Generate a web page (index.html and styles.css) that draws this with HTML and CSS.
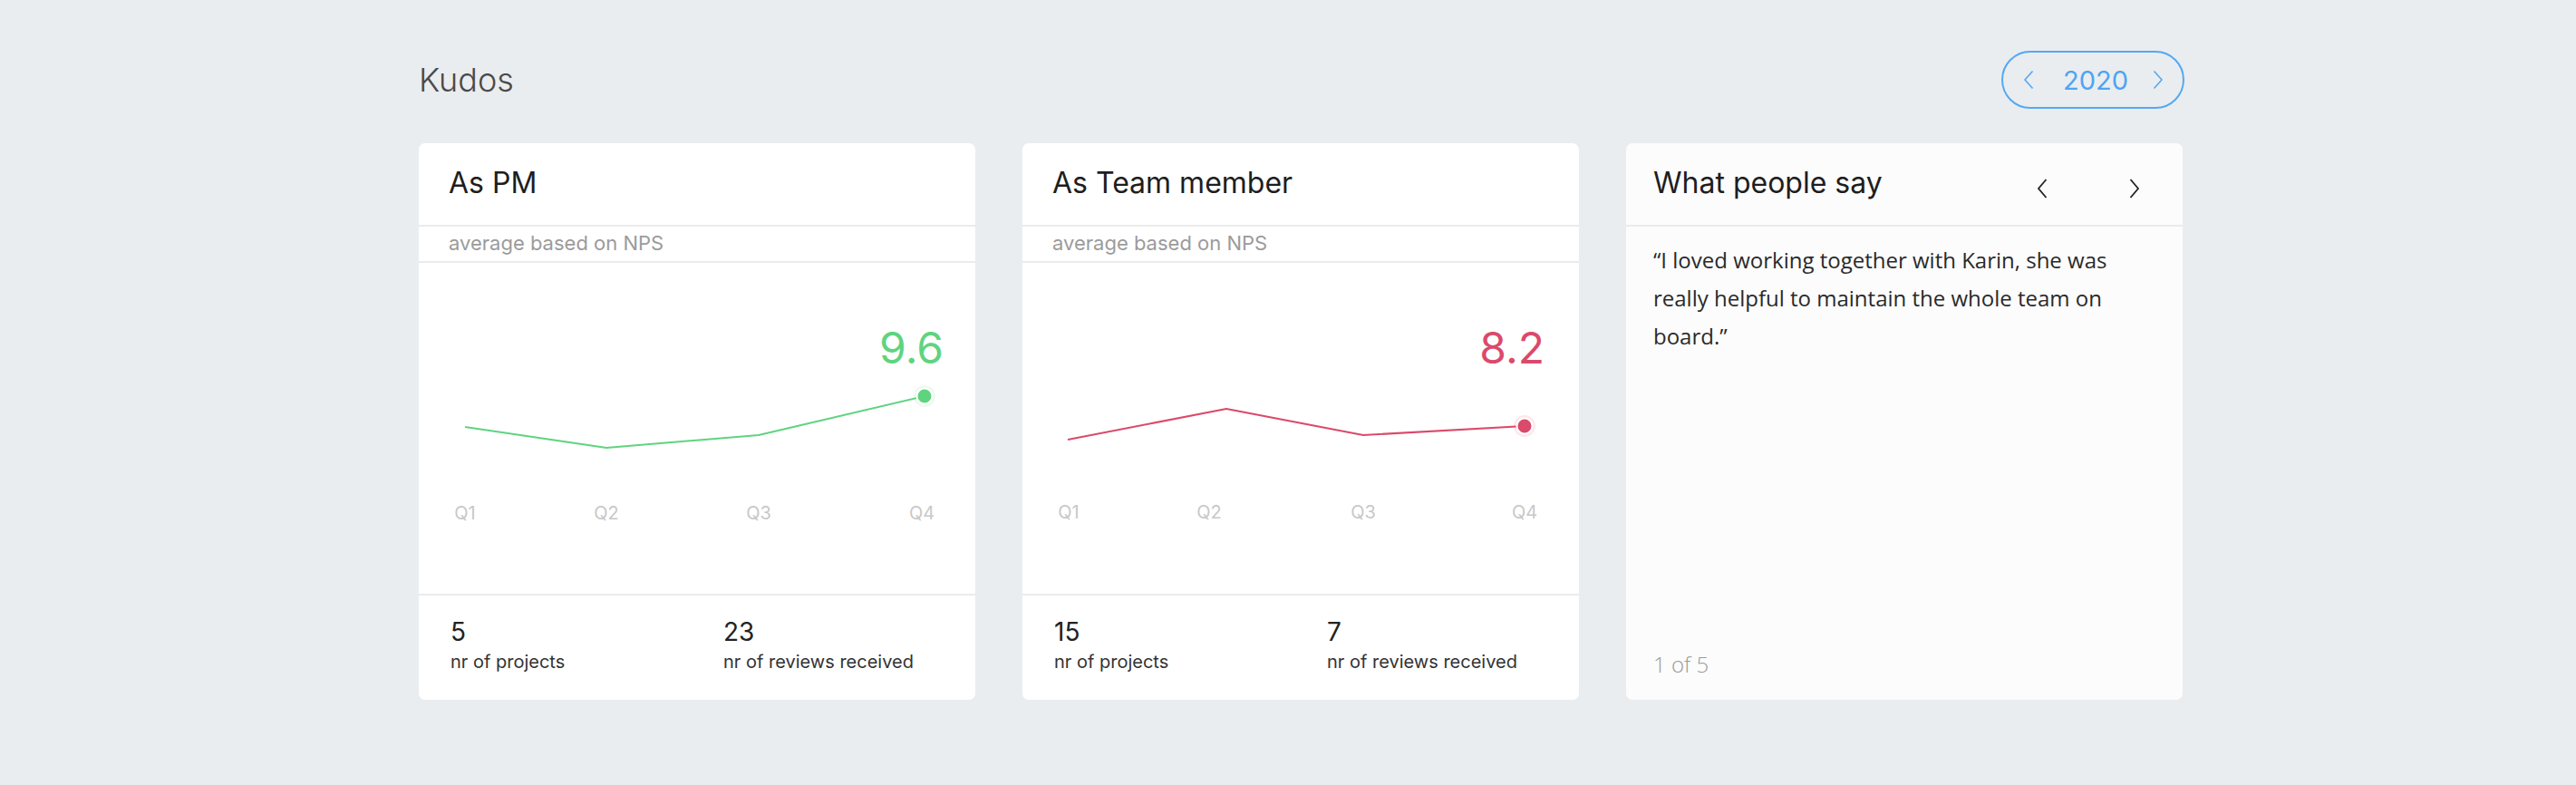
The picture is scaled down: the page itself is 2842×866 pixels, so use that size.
FILE: index.html
```html
<!DOCTYPE html>
<html lang="en">
<head>
<meta charset="utf-8">
<title>Kudos</title>
<link rel="stylesheet" href="styles.css">
</head>
<body>
<main class="page">
  <header class="top">
    <h1 class="page-title">Kudos</h1>
    <div class="year-pill">
      <button class="pill-arrow" aria-label="Previous year">
        <svg width="12" height="22" viewBox="0 0 12 22"><path d="M10.5 1.5 L2 11 L10.5 20.5" /></svg>
      </button>
      <span class="year">2020</span>
      <button class="pill-arrow" aria-label="Next year">
        <svg width="12" height="22" viewBox="0 0 12 22"><path d="M1.5 1.5 L10 11 L1.5 20.5" /></svg>
      </button>
    </div>
  </header>

  <section class="cards">
    <article class="card">
      <div class="card-head"><h2 class="card-title">As PM</h2></div>
      <div class="card-sub">average based on NPS</div>
      <div class="chart">
        <svg class="plot plot-green" width="614" height="365" viewBox="0 0 614 365">
          <polyline class="line" points="51,181 207,204 375,190 558,147" />
          <circle class="halo" cx="558" cy="147" r="12" />
          <circle class="dot" cx="558" cy="147" r="8.5" />
          <text class="q" x="51" y="283">Q1</text>
          <text class="q" x="207" y="283">Q2</text>
          <text class="q" x="375" y="283">Q3</text>
          <text class="q" x="555" y="283">Q4</text>
        </svg>
        <div class="score score-green">9.6</div>
      </div>
      <div class="stats">
        <div class="stat"><div class="stat-num">5</div><div class="stat-label">nr of projects</div></div>
        <div class="stat"><div class="stat-num">23</div><div class="stat-label">nr of reviews received</div></div>
      </div>
    </article>

    <article class="card">
      <div class="card-head"><h2 class="card-title">As Team member</h2></div>
      <div class="card-sub">average based on NPS</div>
      <div class="chart">
        <svg class="plot plot-red" width="614" height="365" viewBox="0 0 614 365">
          <polyline class="line" points="50,195 225,161 376,190 554,180" />
          <circle class="halo" cx="554" cy="180" r="12" />
          <circle class="dot" cx="554" cy="180" r="8.5" />
          <text class="q" x="51" y="282">Q1</text>
          <text class="q" x="206" y="282">Q2</text>
          <text class="q" x="376" y="282">Q3</text>
          <text class="q" x="554" y="282">Q4</text>
        </svg>
        <div class="score score-red">8.2</div>
      </div>
      <div class="stats">
        <div class="stat"><div class="stat-num">15</div><div class="stat-label">nr of projects</div></div>
        <div class="stat"><div class="stat-num">7</div><div class="stat-label">nr of reviews received</div></div>
      </div>
    </article>

    <article class="card card-quotes">
      <div class="card-head quote-head">
        <h2 class="card-title">What people say</h2>
        <div class="quote-nav">
          <button class="nav-arrow" aria-label="Previous">
            <svg width="12" height="22" viewBox="0 0 12 22"><path d="M10.5 1 L2 11 L10.5 21" /></svg>
          </button>
          <button class="nav-arrow" aria-label="Next">
            <svg width="12" height="22" viewBox="0 0 12 22"><path d="M1.5 1 L10 11 L1.5 21" /></svg>
          </button>
        </div>
      </div>
      <div class="quote-body">
        <p class="quote">“I loved working together with Karin, she was really helpful to maintain the whole team on board.”</p>
        <div class="quote-count">1 of 5</div>
      </div>
    </article>
  </section>
</main>
</body>
</html>
```

FILE: styles.css
```css
* { box-sizing: border-box; }

html, body {
  margin: 0;
  padding: 0;
}

body {
  background: #e9edf0;
  font-family: "Inter", "Liberation Sans", sans-serif;
  color: #222;
}

.page {
  width: 1946px;
  margin-left: 462px;
  padding-top: 56px;
}

.top {
  display: flex;
  align-items: center;
  justify-content: space-between;
  height: 64px;
}

.page-title {
  margin: 0;
  font-size: 36px;
  font-weight: 300;
  line-height: 1;
  color: #4a4a4a;
}

.year-pill {
  display: inline-flex;
  align-items: center;
  height: 64px;
  width: 202px;
  margin-right: -2px;
  padding: 0 0 0 22px;
  border: 2px solid #55a8f2;
  border-radius: 32px;
}

.pill-arrow,
.nav-arrow {
  display: flex;
  align-items: center;
  justify-content: center;
  padding: 0;
  border: 0;
  background: none;
  cursor: pointer;
}

.pill-arrow svg path {
  fill: none;
  stroke: #55a8f2;
  stroke-width: 1.6;
}

.year {
  margin: 0 27px 0 32px;
  font-size: 29px;
  font-weight: 400;
  line-height: 1;
  color: #4fa4f3;
}

.cards {
  display: grid;
  grid-template-columns: repeat(3, 614px);
  gap: 52px;
  margin-top: 38px;
}

.card {
  display: flex;
  flex-direction: column;
  height: 614px;
  background: #fff;
  border-radius: 7px;
  overflow: hidden;
}

.card-head {
  height: 92px;
  padding: 25px 33px 0;
  border-bottom: 2px solid #ebebeb;
  flex: none;
}

.card-title {
  margin: 0;
  font-size: 32px;
  font-weight: 400;
  line-height: 1.2;
  color: #1e1e1e;
}

.card-sub {
  height: 40px;
  padding: 5px 33px 0;
  border-bottom: 2px solid #ebebeb;
  font-size: 22px;
  font-weight: 400;
  line-height: 1.2;
  color: #9b9b9b;
  flex: none;
}

.chart {
  position: relative;
  height: 367px;
  border-bottom: 2px solid #ebebeb;
  flex: none;
}

.plot {
  display: block;
}

.plot .line {
  fill: none;
  stroke-width: 2;
  stroke-linejoin: round;
}

.plot .dot {
  stroke: #fff;
  stroke-width: 2;
}

.plot .halo {
  opacity: 0.12;
}

.plot-green .line { stroke: #5fd47f; }
.plot-green .dot,
.plot-green .halo { fill: #5fd47f; }

.plot-red .line { stroke: #da4a6b; }
.plot-red .dot,
.plot-red .halo { fill: #da4a6b; }

.plot .q {
  font-family: "Inter", "Liberation Sans", sans-serif;
  font-size: 20px;
  font-weight: 400;
  fill: #c8c8c8;
  text-anchor: middle;
}

.score {
  position: absolute;
  top: 70px;
  right: 35px;
  font-size: 48px;
  font-weight: 400;
  line-height: 1;
}

.score-green { color: #5fd47f; }
.score-red { color: #da4a6b; right: 38px; }

.stats {
  display: grid;
  grid-template-columns: 301px auto;
  padding: 24px 0 0 35px;
  flex: 1;
}

.stat-num {
  font-size: 28px;
  font-weight: 400;
  line-height: 1.2;
  color: #222;
}

.stat-label {
  margin-top: 3px;
  font-size: 20px;
  font-weight: 400;
  line-height: 24px;
  color: #333;
}

/* quotes card */
.card-quotes {
  background: #fcfcfc;
}

.quote-head {
  display: flex;
  align-items: flex-start;
  justify-content: space-between;
  padding: 25px 33px 0 30px;
}

.quote-nav {
  display: flex;
  gap: 62px;
  margin-top: 6px;
}

.nav-arrow {
  width: 40px;
  height: 38px;
}

.nav-arrow svg path {
  fill: none;
  stroke: #222;
  stroke-width: 1.8;
}

.quote-body {
  display: flex;
  flex-direction: column;
  flex: 1;
  padding: 16px 30px 18px;
}

.quote {
  margin: 0;
  font-family: "Open Sans", "Liberation Sans", sans-serif;
  font-size: 24px;
  line-height: 42px;
  color: #2a2a2a;
}

.quote-count {
  margin-top: auto;
  font-family: "Open Sans", "Liberation Sans", sans-serif;
  font-size: 24px;
  font-weight: 300;
  line-height: 42px;
  color: #9a9a9a;
}
```
